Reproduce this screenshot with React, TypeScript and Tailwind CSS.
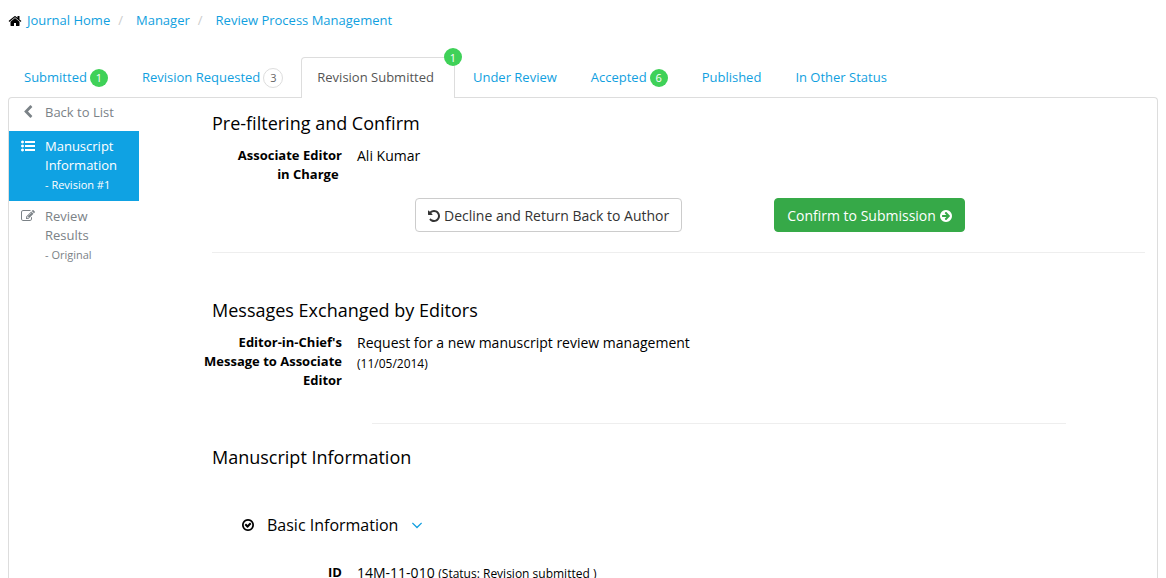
import type { ReactNode } from "react";

const paths = {
  home: "M1472 992v480q0 26-19 45t-45 19h-384v-384h-256v384h-384q-26 0-45-19t-19-45v-480q0-1 .5-3t.5-3l575-474 575 474q1 2 1 6zm223-69l-62 74q-8 9-21 11h-3q-13 0-21-7l-692-577-692 577q-12 8-24 7-13-2-21-11l-62-74q-8-10-7-23.5t11-21.5l719-599q32-26 76-26t76 26l244 204v-195q0-14 9-23t23-9h192q14 0 23 9t9 23v408l219 182q10 8 11 21.5t-7 23.5z",
  chevronLeft: "M1427 301l-531 531 531 531q19 19 19 45t-19 45l-166 166q-19 19-45 19t-45-19l-742-742q-19-19-19-45t19-45l742-742q19-19 45-19t45 19l166 166q19 19 19 45t-19 45z",
  list: "M384 1408q0 80-56 136t-136 56-136-56-56-136 56-136 136-56 136 56 56 136zm0-512q0 80-56 136t-136 56-136-56-56-136 56-136 136-56 136 56 56 136zm1408 416v192q0 13-9.5 22.5t-22.5 9.5h-1216q-13 0-22.5-9.5t-9.5-22.5v-192q0-13 9.5-22.5t22.5-9.5h1216q13 0 22.5 9.5t9.5 22.5zm-1408-928q0 80-56 136t-136 56-136-56-56-136 56-136 136-56 136 56 56 136zm1408 416v192q0 13-9.5 22.5t-22.5 9.5h-1216q-13 0-22.5-9.5t-9.5-22.5v-192q0-13 9.5-22.5t22.5-9.5h1216q13 0 22.5 9.5t9.5 22.5zm0-512v192q0 13-9.5 22.5t-22.5 9.5h-1216q-13 0-22.5-9.5t-9.5-22.5v-192q0-13 9.5-22.5t22.5-9.5h1216q13 0 22.5 9.5t9.5 22.5z",
  edit: "M888 1184l116-116-152-152-116 116v56h96v96h56zm440-720q-16-16-33 1l-350 350q-17 17-1 33t33-1l350-350q17-17 1-33zm80 594v190q0 119-84.5 203.5t-203.5 84.5h-832q-119 0-203.5-84.5t-84.5-203.5v-832q0-119 84.5-203.5t203.5-84.5h832q63 0 117 25 15 7 18 23 3 17-9 29l-49 49q-14 14-32 8-23-6-45-6h-832q-66 0-113 47t-47 113v832q0 66 47 113t113 47h832q66 0 113-47t47-113v-126q0-13 9-22l64-64q15-15 35-7t20 29zm-96-738l288 288-672 672h-288v-288zm444 132l-92 92-288-288 92-92q28-28 68-28t68 28l152 152q28 28 28 68t-28 68z",
  undo: "M1664 896q0 156-61 298t-164 245-245 164-298 61q-172 0-327-72.5t-264-204.5q-7-10-6.5-22.5t8.5-20.5l137-138q10-9 25-9 16 2 23 12 73 95 179 147t225 52q104 0 198.5-40.5t163.5-109.5 109.5-163.5 40.5-198.5-40.5-198.5-109.5-163.5-163.5-109.5-198.5-40.5q-98 0-188 35.5t-160 101.5l137 138q31 30 14 69-17 40-59 40h-448q-26 0-45-19t-19-45v-448q0-42 40-59 39-17 69 14l130 129q107-101 244.5-156.5t284.5-55.5q156 0 298 61t245 164 164 245 61 298z",
  arrowCircle: "M1413 896q0-27-18-45l-91-91-362-362q-18-18-45-18t-45 18l-91 91q-18 18-18 45t18 45l189 189h-502q-26 0-45 19t-19 45v128q0 26 19 45t45 19h502l-189 189q-18 18-18 45t18 45l91 91q18 18 45 18t45-18l362-362 91-91q18-18 18-45zm251 0q0 209-103 385.5t-279.5 279.5-385.5 103-385.5-103-279.5-279.5-103-385.5 103-385.5 279.5-279.5 385.5-103 385.5 103 279.5 279.5 103 385.5z",
  checkCircle: "M1299 813l-422 422q-19 19-45 19t-45-19l-294-294q-19-19-19-45t19-45l102-102q19-19 45-19t45 19l147 147 275-275q19-19 45-19t45 19l102 102q19 19 19 45t-19 45zm141 83q0-148-73-273t-198-198-273-73-273 73-198 198-73 273 73 273 198 198 273 73 273-73 198-198 73-273zm224 0q0 209-103 385.5t-279.5 279.5-385.5 103-385.5-103-279.5-279.5-103-385.5 103-385.5 279.5-279.5 385.5-103 385.5 103 279.5 279.5 103 385.5z",
  angleDown: "M1395 736q0 13-10 23l-466 466q-10 10-23 10t-23-10l-466-466q-10-10-10-23t10-23l50-50q10-10 23-10t23 10l393 393 393-393q10-10 23-10t23 10l50 50q10 10 10 23z",
};

function Icon({ name, className }: { name: keyof typeof paths; className: string }) {
  return (
    <svg viewBox="0 0 1792 1792" fill="currentColor" aria-hidden="true" className={`shrink-0 ${className}`}>
      <path d={paths[name]} />
    </svg>
  );
}

function Badge({ children, outline = false }: { children: ReactNode; outline?: boolean }) {
  return (
    <span
      className={
        outline
          ? "flex size-5 items-center justify-center rounded-full border border-[#ddd] bg-white text-[11px] leading-none text-[#666]"
          : "flex size-[18px] items-center justify-center rounded-full bg-[#3fd158] text-[11px] leading-none text-white"
      }
    >
      {children}
    </span>
  );
}

type TabItem = { label: string; count?: number; outline?: boolean; active?: boolean };

const tabs: TabItem[] = [
  { label: "Submitted", count: 1 },
  { label: "Revision Requested", count: 3, outline: true },
  { label: "Revision Submitted", count: 1, active: true },
  { label: "Under Review" },
  { label: "Accepted", count: 6 },
  { label: "Published" },
  { label: "In Other Status" },
];

function Tab({ label, count, outline, active }: TabItem) {
  if (active) {
    return (
      <a
        href="#"
        aria-current="page"
        className="relative flex h-[41px] items-center rounded-t border border-b-0 border-[#ddd] bg-white pr-5 pb-px pl-[15px] text-[#555]"
      >
        {label}
        <span className="absolute -top-2.5 -right-2">
          <Badge>{count}</Badge>
        </span>
      </a>
    );
  }
  return (
    <a href="#" className="flex h-[41px] items-center gap-[3px] px-4 text-[#119fe0]">
      {label}
      {count !== undefined && <Badge outline={outline}>{count}</Badge>}
    </a>
  );
}

function Field({ label, children }: { label: string; children: ReactNode }) {
  return (
    <div className="flex gap-[15px]">
      <dt className="w-[145px] shrink-0 text-right text-[13px] leading-[19px] font-bold">{label}</dt>
      <dd className="text-sm leading-5">{children}</dd>
    </div>
  );
}

export default function App() {
  return (
    <div className="bg-white px-2 font-['Open_Sans','Noto_Sans',sans-serif] text-[13px] leading-[19px] text-black">
      <nav aria-label="Breadcrumb" className="pt-[11px]">
        <ol className="flex items-center">
          <li className="flex items-center gap-[5px]">
            <Icon name="home" className="size-[14px]" />
            <a href="#" className="text-[#119fe0]">Journal Home</a>
          </li>
          {["Manager", "Review Process Management"].map((crumb) => (
            <li key={crumb} className="flex items-center">
              <span className="pr-[13px] pl-2 text-[#ccc]">/</span>
              <a href="#" className="text-[#119fe0]">{crumb}</a>
            </li>
          ))}
        </ol>
      </nav>

      <nav aria-label="Manuscript status" className="mt-[27px] flex gap-0.5">
        {tabs.map((tab) => (
          <Tab key={tab.label} {...tab} />
        ))}
      </nav>

      <div className="-mt-px flex rounded-t border border-b-0 border-[#ddd]">
        <aside className="w-[130px] shrink-0 text-[#7b8287]">
          <a href="#" className="flex gap-2.5 pt-[5px] pb-[9px] pl-3">
            <Icon name="chevronLeft" className="mt-0.5 size-[14px]" />
            Back to List
          </a>
          <a href="#" className="flex gap-2.5 bg-[#0fa2e3] pt-1.5 pb-[7px] pl-3 text-white">
            <Icon name="list" className="mt-0.5 size-[14px]" />
            <span>
              Manuscript
              <br />
              Information
              <small className="block text-[11px]">- Revision #1</small>
            </span>
          </a>
          <a href="#" className="flex gap-2.5 pt-1.5 pb-[7px] pl-3">
            <Icon name="edit" className="mt-0.5 size-[14px]" />
            <span>
              Review
              <br />
              Results
              <small className="block text-[11px]">- Original</small>
            </span>
          </a>
        </aside>

        <main className="ml-[58px] grow pr-3">
          <section>
            <h4 className="pt-[15px] pl-[15px] text-lg leading-5">Pre-filtering and Confirm</h4>
            <dl className="mt-[13px]">
              <Field label={"Associate Editor in\u00a0Charge\u00a0"}>Ali Kumar</Field>
            </dl>
            <div className="mt-3.5 flex gap-[92px] pl-[218px]">
              <button
                type="button"
                className="flex h-[34px] items-center gap-[3px] rounded border border-[#ccc] bg-white pt-px pr-3 pl-[11px] text-sm text-[#333]"
              >
                <Icon name="undo" className="size-[14px]" />
                Decline and Return Back to Author
              </button>
              <button
                type="button"
                className="flex h-[34px] items-center gap-[3px] rounded border border-[#36ab47] bg-[#36a948] pt-px pr-[11px] pl-3 text-sm text-white"
              >
                Confirm to Submission
                <Icon name="arrowCircle" className="size-[14px]" />
              </button>
            </div>
            <hr className="mt-5 ml-[15px] border-[#eee]" />
          </section>

          <section>
            <h4 className="pt-[47px] pl-[15px] text-lg leading-5">Messages Exchanged by Editors</h4>
            <dl className="mt-[13px]">
              <Field label="Editor-in-Chief's Message to Associate Editor">
                Request for a new manuscript review management
                <small className="block pt-px text-xs leading-5">(11/05/2014)</small>
              </Field>
            </dl>
            <hr className="mt-[33px] mr-[79px] ml-[175px] border-[#eee]" />
          </section>

          <section>
            <h4 className="pt-[23px] pl-[15px] text-lg leading-5">Manuscript Information</h4>
            <h5 className="mt-12 flex items-center pl-11 text-base leading-5">
              <Icon name="checkCircle" className="mr-3 size-[14px]" />
              Basic Information
              <button type="button" aria-label="Toggle basic information" className="ml-2.5 text-[#119fe0]">
                <Icon name="angleDown" className="size-[18px]" />
              </button>
            </h5>
            <dl className="mt-7">
              <Field label="ID">
                14M-11-010 <small className="text-xs">(Status: Revision submitted )</small>
              </Field>
            </dl>
          </section>
        </main>
      </div>
    </div>
  );
}
